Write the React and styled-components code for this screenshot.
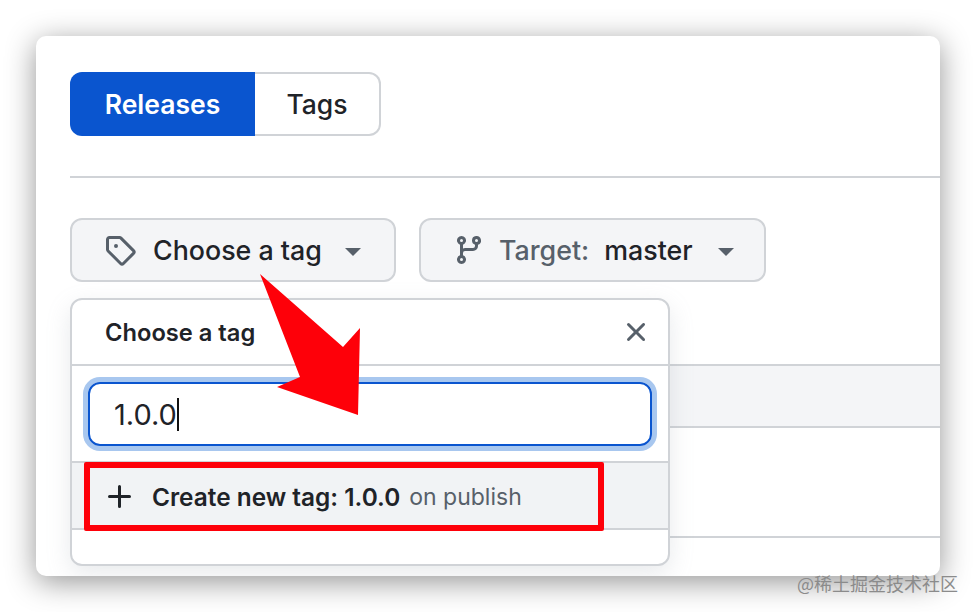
import React from "react";
import styled, { createGlobalStyle } from "styled-components";

const Global = createGlobalStyle`
  html, body { margin: 0; padding: 0; background: #fff; }
  body { width: 976px; height: 612px; overflow: hidden; font-family: Inter, "Liberation Sans", "Noto Sans CJK SC", sans-serif; color: #1f2328; }
`;

const Stage = styled.div`
  position: relative;
  width: 976px;
  height: 612px;
  padding: 36px;
  box-sizing: border-box;
`;

const Window = styled.div`
  position: relative;
  height: 540px;
  box-sizing: border-box;
  padding: 36px 0 0 34px;
  background: #fff;
  border-radius: 10px;
  box-shadow: 0 6px 30px rgba(0, 0, 0, 0.42);
  overflow: hidden;
`;

const Tabs = styled.div`
  display: flex;
  width: 311px;
  height: 64px;
`;

const Tab = styled.div`
  display: flex;
  align-items: center;
  justify-content: center;
  box-sizing: border-box;
  font-size: 26.5px;
  ${(p) =>
    p.$active
      ? `width: 185px; background: #0a55cf; color: #fff; font-weight: 600; border-radius: 12px 0 0 12px;`
      : `flex: 1; color: #1f2328; font-weight: 500; border: 2px solid #d0d3d7; border-left: 0; border-radius: 0 12px 12px 0;`}
`;

const Divider = styled.div`
  height: 2px;
  margin-top: 40px;
  background: #d0d3d7;
`;

const Controls = styled.div`
  display: flex;
  gap: 23px;
  margin-top: 40px;
`;

const Select = styled.div`
  display: flex;
  align-items: center;
  box-sizing: border-box;
  width: ${(p) => p.$width}px;
  height: 64px;
  padding-left: 32px;
  background: #f4f5f7;
  border: 2px solid #d0d3d7;
  border-radius: 12px;
  font-size: 26.8px;
  font-weight: 500;
  white-space: nowrap;
`;

const Icon = styled.svg`
  flex: none;
  width: ${(p) => p.$size || 32}px;
  height: ${(p) => p.$size || 32}px;
  fill: ${(p) => p.$color || "#57606a"};
`;

const SelectText = styled.span`
  margin-left: ${(p) => p.$gap}px;
  color: ${(p) => p.$color || "#1f2328"};
  font-weight: ${(p) => p.$weight || 500};
`;

const Caret = styled.span`
  flex: none;
  margin-left: ${(p) => p.$gap}px;
  width: 0;
  height: 0;
  border-left: 8px solid transparent;
  border-right: 8px solid transparent;
  border-top: 8px solid #57606a;
  margin-top: 3px;
`;

const Table = styled.div`
  margin-top: 82px;
`;

const TableBand = styled.div`
  height: 60px;
  background: #f4f5f7;
  border-top: 2px solid #d0d3d7;
  border-bottom: 2px solid #d0d3d7;
`;

const TableRow = styled.div`
  height: 108px;
  border-bottom: 2px solid #d0d3d7;
`;

const Popover = styled.div`
  position: absolute;
  left: 34px;
  top: 262px;
  width: 600px;
  height: 268px;
  box-sizing: border-box;
  background: #fff;
  border: 2px solid #d0d3d7;
  border-radius: 12px;
  box-shadow: 0 8px 24px rgba(140, 149, 159, 0.2);
  display: flex;
  flex-direction: column;
`;

const PopHeader = styled.div`
  display: flex;
  align-items: center;
  justify-content: space-between;
  height: 64px;
  padding: 0 16px 0 33px;
  border-bottom: 2px solid #d0d3d7;
  font-size: 23.7px;
  font-weight: 600;
`;

const SearchArea = styled.div`
  height: 97px;
  box-sizing: border-box;
  padding: 16px 16px 0;
  border-bottom: 2px solid #d0d3d7;
`;

const SearchBox = styled.div`
  display: flex;
  align-items: center;
  box-sizing: border-box;
  height: 64px;
  padding-left: 24px;
  border: 2px solid #0a55cf;
  border-radius: 12px;
  box-shadow: 0 0 0 5px #a8c7ef;
  font-size: 29px;
  color: #1f2328;
`;

const TextCursor = styled.span`
  width: 2px;
  height: 33px;
  background: #111;
`;

const CreateRow = styled.div`
  display: flex;
  align-items: center;
  height: 63px;
  padding-left: 32px;
  padding-top: 2px;
  background: #f1f3f5;
  border-bottom: 2px solid #d0d3d7;
  font-size: 24.4px;
  font-weight: 600;
`;

const CreateLabel = styled.span`
  margin-left: 16px;
`;

const Muted = styled.span`
  margin-left: 9px;
  color: #57606a;
  font-size: 23px;
  font-weight: 400;
`;

const Highlight = styled.div`
  position: absolute;
  left: 84px;
  top: 462px;
  width: 520px;
  height: 69px;
  box-sizing: border-box;
  border: 6px solid #fe0009;
  border-radius: 2px;
`;

const Arrow = styled.svg`
  position: absolute;
  left: 0;
  top: 0;
  width: 976px;
  height: 612px;
  pointer-events: none;
`;

const Watermark = styled.div`
  position: absolute;
  left: 797px;
  top: 571px;
  font-family: "Noto Sans CJK SC", "Liberation Sans", sans-serif;
  font-size: 18px;
  line-height: 24px;
  color: #8b8b8b;
  white-space: nowrap;
`;

const paths = {
  tag: "M1 7.775V2.75C1 1.784 1.784 1 2.75 1h5.025c.464 0 .91.184 1.238.513l6.25 6.25a1.75 1.75 0 0 1 0 2.474l-5.026 5.026a1.75 1.75 0 0 1-2.474 0l-6.25-6.25A1.752 1.752 0 0 1 1 7.775Zm1.5 0c0 .066.026.13.073.177l6.25 6.25a.25.25 0 0 0 .354 0l5.025-5.025a.25.25 0 0 0 0-.354l-6.25-6.25a.25.25 0 0 0-.177-.073H2.75a.25.25 0 0 0-.25.25ZM6 5a1 1 0 1 1 0 2 1 1 0 0 1 0-2Z",
  branch: "M9.5 3.25a2.25 2.25 0 1 1 3 2.122V6A2.5 2.5 0 0 1 10 8.5H6a1 1 0 0 0-1 1v1.128a2.251 2.251 0 1 1-1.5 0V5.372a2.25 2.25 0 1 1 1.5 0v1.836A2.493 2.493 0 0 1 6 7h4a1 1 0 0 0 1-1v-.628A2.25 2.25 0 0 1 9.5 3.25Zm-6 0a.75.75 0 1 0 1.5 0 .75.75 0 0 0-1.5 0Zm8.25-.75a.75.75 0 1 0 0 1.5.75.75 0 0 0 0-1.5ZM4.25 12a.75.75 0 1 0 0 1.5.75.75 0 0 0 0-1.5Z",
  x: "M3.72 3.72a.75.75 0 0 1 1.06 0L8 6.94l3.22-3.22a.749.749 0 0 1 1.275.326.749.749 0 0 1-.215.734L9.06 8l3.22 3.22a.749.749 0 0 1-.326 1.275.749.749 0 0 1-.734-.215L8 9.06l-3.22 3.22a.751.751 0 0 1-1.042-.018.751.751 0 0 1-.018-1.042L6.94 8 3.72 4.78a.75.75 0 0 1 0-1.06Z",
  plus: "M7.75 2a.75.75 0 0 1 .75.75V7h4.25a.75.75 0 0 1 0 1.5H8.5v4.25a.75.75 0 0 1-1.5 0V8.5H2.75a.75.75 0 0 1 0-1.5H7V2.75A.75.75 0 0 1 7.75 2Z",
};

const Octicon = ({ name, size, color }) => (
  <Icon viewBox="0 0 16 16" $size={size} $color={color}>
    <path d={paths[name]} />
  </Icon>
);

export default function App() {
  return (
    <>
      <Global />
      <Stage>
        <Window>
          <Tabs>
            <Tab $active>Releases</Tab>
            <Tab>Tags</Tab>
          </Tabs>
          <Divider />
          <Controls>
            <Select $width={326}>
              <Octicon name="tag" />
              <SelectText $gap={17}>Choose a tag</SelectText>
              <Caret $gap={23} />
            </Select>
            <Select $width={347}>
              <Octicon name="branch" />
              <SelectText $gap={14} $color="#57606a">Target:</SelectText>
              <SelectText $gap={15}>master</SelectText>
              <Caret $gap={25} />
            </Select>
          </Controls>
          <Table>
            <TableBand />
            <TableRow />
          </Table>
          <Popover>
            <PopHeader>
              Choose a tag
              <Octicon name="x" />
            </PopHeader>
            <SearchArea>
              <SearchBox>
                1.0.0
                <TextCursor />
              </SearchBox>
            </SearchArea>
            <CreateRow>
              <Octicon name="plus" color="#1f2328" />
              <CreateLabel>Create new tag: 1.0.0</CreateLabel>
              <Muted>on publish</Muted>
            </CreateRow>
          </Popover>
        </Window>
        <Highlight />
        <Arrow viewBox="0 0 976 612">
          <polygon fill="#fe0009" points="260,274 343,347 360,328 358,415 277,387 300,377" />
        </Arrow>
        <Watermark>@稀土掘金技术社区</Watermark>
      </Stage>
    </>
  );
}
